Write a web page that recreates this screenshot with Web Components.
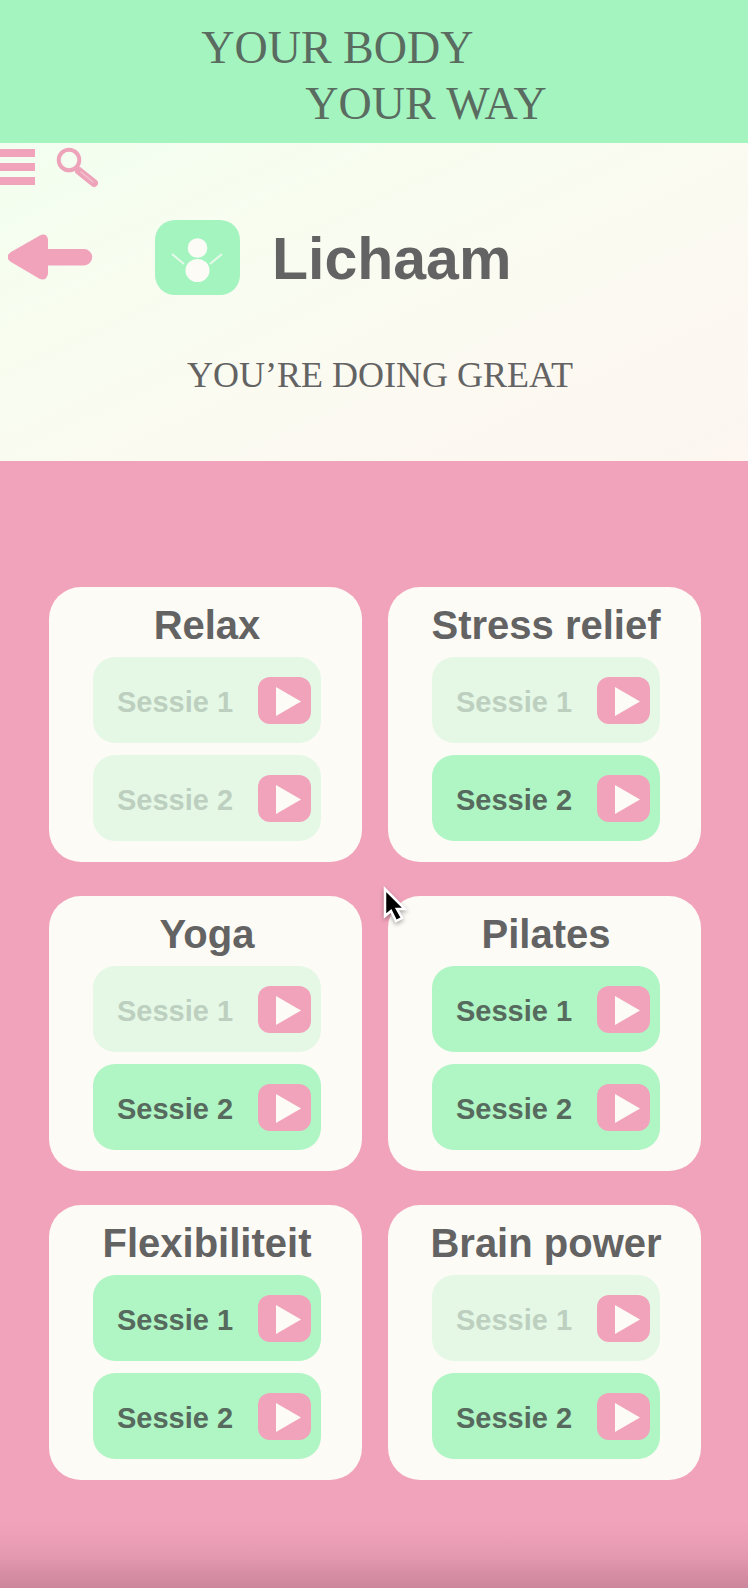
<!DOCTYPE html>
<html lang="nl">
<head>
<meta charset="utf-8">
<meta name="viewport" content="width=device-width, initial-scale=1">
<title>Your Body Your Way – Lichaam</title>
<style>
  html, body { margin: 0; }
  body {
    --pink: #f1a3bb;
    --green: #a4f4c0;
    --cream: #fdfbf6;
    --ink: #636363;
    --serif: "Liberation Serif", "Times New Roman", serif;
    --sans: "Liberation Sans", Arial, sans-serif;
    color: var(--ink);
    font-family: var(--sans);
    background: var(--pink);
  }
</style>
</head>
<body>
<body-app></body-app>

<script>
const define = (name, markup, init) => {
  const template = document.createElement('template');
  template.innerHTML = markup;
  customElements.define(name, class extends HTMLElement {
    constructor() {
      super();
      this.attachShadow({ mode: 'open' }).append(template.content.cloneNode(true));
    }
    connectedCallback() {
      if (init) init(this, this.shadowRoot);
    }
  });
};

define('brand-banner', `
<style>
  :host { display: block; background: var(--green); padding: 20px 0 11px; box-sizing: border-box; }
  h1 { margin: 0 auto; width: fit-content; font: 400 46px/56px var(--serif); color: #5a6b60; }
  span { display: block; }
  .second { padding-left: 104px; }
</style>
<h1><span>YOUR BODY</span><span class="second">YOUR WAY</span></h1>`);

define('top-tools', `
<style>
  :host { display: flex; gap: 20px; height: 46px; align-items: flex-start; padding-top: 4px; box-sizing: border-box; }
  button { border: 0; background: none; padding: 0; margin: 0; cursor: pointer; }
  svg { display: block; }
</style>
<button aria-label="Menu"><svg width="36" height="40" viewBox="0 0 36 40" fill="#f1a3bb"><path d="M0 2h35v8H0zM0 16h35v8H0zM0 30h35v8H0z"/></svg></button>
<button aria-label="Zoeken"><svg width="44" height="42" viewBox="0 0 44 42" fill="none" stroke="#eda4ba" stroke-linecap="round"><circle cx="13" cy="13" r="10.300" stroke-width="4"/><path d="M23 24l15 12" stroke-width="8"/><path d="M25 25l12 10" stroke="#f3c3d0" stroke-width="1.200"/></svg></button>`);

define('page-title', `
<style>
  :host { display: flex; align-items: center; height: 76px; padding: 0 8px; }
  svg { display: block; }
  .mark { margin-left: 62px; }
  h2 { margin: 0 0 0 32px; padding-top: 4px; font: 700 59px/68px var(--sans); }
</style>
<a href="#terug" aria-label="Terug"><svg width="85" height="46" viewBox="0 0 85 46" fill="#f1a3bb"><path d="M3 18L31 2Q38-2 40 5V15H76A8.200 8.200 0 0 1 76 31.400H40V40Q38 48 31 44.500L3 28Q-4 23 3 18Z"/></svg></a>
<svg class="mark" width="85" height="75" viewBox="0 0 85 75"><rect width="85" height="75" rx="20" fill="#a4f4c0"/><g fill="#fdfbf6"><circle cx="42.500" cy="28" r="9.800"/><ellipse cx="42.500" cy="50.500" rx="12" ry="11.500"/></g><path d="M17 34l12 10M67 34L55 44" stroke="#e6fae9" stroke-width="2"/></svg>
<h2><slot></slot></h2>`);

define('cheer-line', `
<style>
  :host { display: block; padding-left: 12px; text-align: center; font: 400 36px/44px var(--serif); }
  p { margin: 0; }
</style>
<p><slot></slot></p>`);

define('session-button', `
<style>
  :host { display: block; }
  button {
    display: flex; align-items: center; justify-content: space-between;
    width: 100%; min-height: 86px; padding: 0 10px 0 24px;
    border: 0; border-radius: 22px; background: #b0f5c4; color: #566a5d;
    font: 700 29px/34px var(--sans); white-space: nowrap; cursor: pointer;
  }
  :host([done]) button { background: #e5f8e6; color: #bdd0c0; }
  .label { padding-top: 3px; }
  .play { flex: none; width: 53px; height: 47px; border-radius: 12px; background: var(--pink); }
  svg { display: block; }
</style>
<button><span class="label"><slot></slot></span><span class="play"><svg width="53" height="47" viewBox="0 0 53 47" fill="#fdfbf6"><path d="M18 10L43 24.500L18 39Z"/></svg></span></button>`);

define('workout-card', `
<style>
  :host {
    display: flex; flex-direction: column; gap: 12px; box-sizing: border-box; min-width: 0;
    padding: 18px 41px 21px 44px; border-radius: 32px; background: var(--cream);
  }
  h3 { align-self: center; margin: 0; font: 700 40px/40px var(--sans); white-space: nowrap; }
</style>
<h3></h3><slot></slot>`, (host, root) => {
  root.querySelector('h3').textContent = host.getAttribute('name');
});

define('workout-board', `
<style>
  :host {
    display: block; position: relative; flex: 1; padding: 126px 47px 108px 49px; box-sizing: border-box;
    background: linear-gradient(to top, #cc869b 0, #d990a7 18px, #e69ab2 34px, var(--pink) 68px);
  }
  .grid { display: grid; grid-template-columns: repeat(2, minmax(0, 1fr)); gap: 34px 26px; }
  .pointer { position: absolute; left: 381px; top: 423px; filter: drop-shadow(0 2px 2px #0005); }
</style>
<div class="grid"><slot></slot></div>
<svg class="pointer" width="32" height="42" viewBox="0 0 32 42"><path d="M4 5V32L10 27L15 37L21 34L16 25H24Z" fill="#000" stroke="#fff" stroke-width="2.500"/></svg>`);

define('body-app', `
<style>
  :host { display: flex; flex-direction: column; min-height: 100vh; }
  header {
    padding-bottom: 64px;
    background: linear-gradient(155deg, #f2fff0 0%, #f8fdf0 30%, #fbfaf1 60%, #fdf6f1 100%);
  }
  page-title { margin-top: 30px; }
  cheer-line { margin-top: 58px; }
</style>
<brand-banner></brand-banner>
<header>
  <top-tools></top-tools>
  <page-title>Lichaam</page-title>
  <cheer-line>YOU’RE DOING GREAT</cheer-line>
</header>
<workout-board>
  <workout-card name="Relax"><session-button done>Sessie 1</session-button><session-button done>Sessie 2</session-button></workout-card>
  <workout-card name="Stress relief"><session-button done>Sessie 1</session-button><session-button>Sessie 2</session-button></workout-card>
  <workout-card name="Yoga"><session-button done>Sessie 1</session-button><session-button>Sessie 2</session-button></workout-card>
  <workout-card name="Pilates"><session-button>Sessie 1</session-button><session-button>Sessie 2</session-button></workout-card>
  <workout-card name="Flexibiliteit"><session-button>Sessie 1</session-button><session-button>Sessie 2</session-button></workout-card>
  <workout-card name="Brain power"><session-button done>Sessie 1</session-button><session-button>Sessie 2</session-button></workout-card>
</workout-board>`);
</script>
</body>
</html>
